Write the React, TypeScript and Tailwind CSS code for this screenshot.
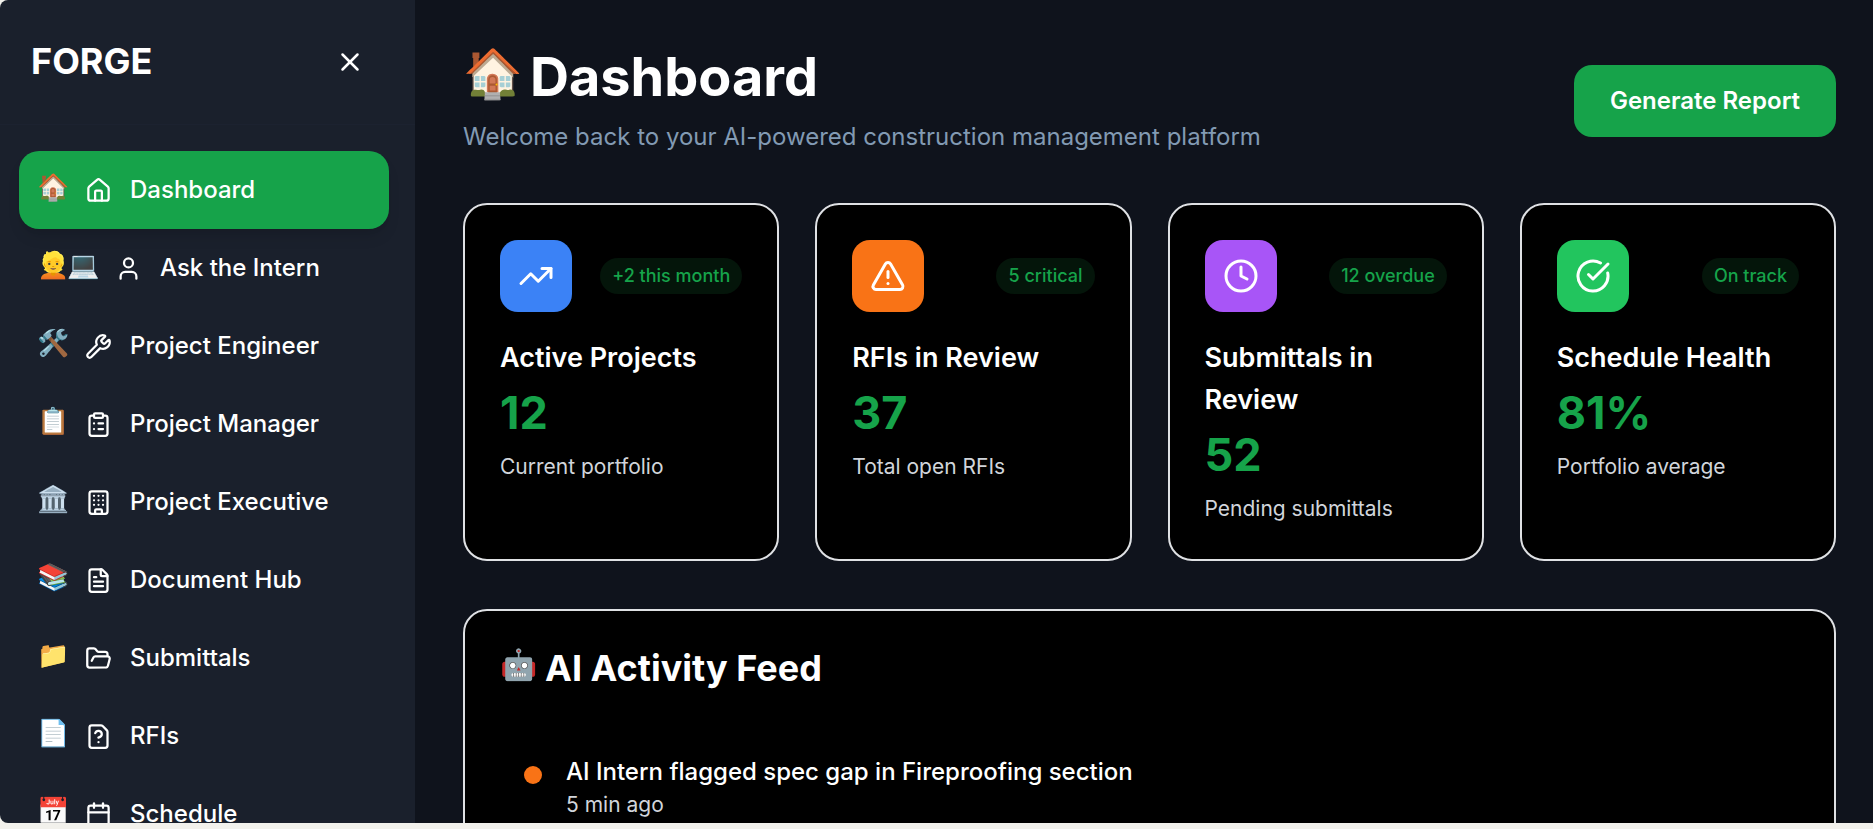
import { X, House, User, Wrench, ClipboardList, Building, FileText, FolderOpen, FileQuestion, Calendar, TrendingUp, TriangleAlert, Clock, CircleCheckBig } from "lucide-react";

const navItems = [
  { emoji: "🏠", icon: House, label: "Dashboard", active: true },
  { emoji: "👱💻", icon: User, label: "Ask the Intern", wide: true },
  { emoji: "🛠️", icon: Wrench, label: "Project Engineer" },
  { emoji: "📋", icon: ClipboardList, label: "Project Manager" },
  { emoji: "🏛️", icon: Building, label: "Project Executive" },
  { emoji: "📚", icon: FileText, label: "Document Hub" },
  { emoji: "📁", icon: FolderOpen, label: "Submittals" },
  { emoji: "📄", icon: FileQuestion, label: "RFIs" },
  { emoji: "📅", icon: Calendar, label: "Schedule" },
];

const stats = [
  { icon: TrendingUp, color: "bg-[#3b82f6]", badge: "+2 this month", title: "Active Projects", value: "12", desc: "Current portfolio" },
  { icon: TriangleAlert, color: "bg-[#f97316]", badge: "5 critical", title: "RFIs in Review", value: "37", desc: "Total open RFIs" },
  { icon: Clock, color: "bg-[#a855f7]", badge: "12 overdue", title: "Submittals in Review", value: "52", desc: "Pending submittals" },
  { icon: CircleCheckBig, color: "bg-[#22c55e]", badge: "On track", title: "Schedule Health", value: "81%", desc: "Portfolio average" },
];

export default function App() {
  return (
    <div className="h-[829px] w-[1873px] overflow-hidden bg-[#f2f1ec] font-['Inter',sans-serif] text-white">
      <div className="flex h-[823px] overflow-hidden rounded-l-[8px]">
        {/* Sidebar */}
        <aside className="w-[415px] shrink-0 bg-[#1a202c]">
          <div className="flex h-[125px] items-center justify-between border-b border-[#1c2230] pl-[31px] pr-[35px]">
            <span className="pb-[2px] text-[36px] font-bold">FORGE</span>
            <X size={30} strokeWidth={2} className="mr-[15px]" />
          </div>
          <nav className="pl-[19px] pr-[26px] pt-[26px]">
            {navItems.map((item) => (
              <div
                key={item.label}
                className={`flex items-center gap-[18px] rounded-[20px] px-[18px] py-[21px] text-[24px] font-medium leading-[36px] ${item.active ? "bg-[#16a34a] shadow-lg" : ""}`}
              >
                <span className={`-mt-[6px] text-[26px] leading-[36px] tracking-[-2px] ${item.wide ? "w-[60px]" : "w-[30px]"}`}>{item.emoji}</span>
                <item.icon size={27} strokeWidth={2} />
                <span>{item.label}</span>
              </div>
            ))}
          </nav>
        </aside>

        {/* Main */}
        <main className="min-w-0 flex-1 bg-[#0f131c] pl-[48px] pr-[37px] pt-[36px]">
          <div className="mb-[48px] flex justify-between">
            <div>
              <h1 className="h-[81px] text-[54px] font-bold leading-[81px]">
                <span className="mr-[14px] inline-block w-[53px] align-[6px] text-[48px] leading-[48px]">🏠</span>Dashboard
              </h1>
              <p className="mt-[2px] text-[24px] leading-[36px] text-[#829ab3]">Welcome back to your AI-powered construction management platform</p>
            </div>
            <button className="mt-[29px] h-[72px] w-[262px] rounded-[18px] bg-[#16a34a] text-[24px] font-semibold">Generate Report</button>
          </div>

          <div className="mb-[48px] grid grid-cols-4 gap-[36px]">
            {stats.map((s) => (
              <div key={s.title} className="rounded-[24px] border-2 border-[#dfe1e4] bg-black p-[35px]">
                <div className="mb-[25px] flex items-center justify-between">
                  <div className={`flex h-[72px] w-[72px] items-center justify-center rounded-[18px] ${s.color}`}>
                    <s.icon size={36} strokeWidth={2} />
                  </div>
                  <span className="rounded-full bg-[#04150a] px-[12px] py-[6px] text-[18px] font-medium leading-[24px] text-[#16a34a]">{s.badge}</span>
                </div>
                <h3 className="mb-[7px] text-[27px] font-semibold leading-[42px]">{s.title}</h3>
                <div className="mb-[12px] text-[45px] font-bold leading-[54px] text-[#16a34a]">{s.value}</div>
                <p className="text-[21px] leading-[30px] text-[#d1d5db]">{s.desc}</p>
              </div>
            ))}
          </div>

          <div className="rounded-[24px] border-2 border-[#dfe1e4] bg-black px-[35px] pb-[60px] pt-[30px]">
            <h2 className="mb-[59px] h-[54px] text-[36px] font-bold leading-[54px]">
              <span className="mr-[10px] inline-block w-[35px] align-[6px] text-[30px] leading-[30px]">🤖</span>AI Activity Feed
            </h2>
            <div className="flex items-start gap-[24px] pl-[24px]">
              <span className="mt-[12px] h-[18px] w-[18px] rounded-full bg-[#f97316]" />
              <div>
                <p className="text-[24px] font-medium leading-[36px]">AI Intern flagged spec gap in Fireproofing section</p>
                <p className="text-[21px] leading-[30px] text-[#d1d5db]">5 min ago</p>
              </div>
            </div>
          </div>
        </main>
      </div>
    </div>
  );
}
